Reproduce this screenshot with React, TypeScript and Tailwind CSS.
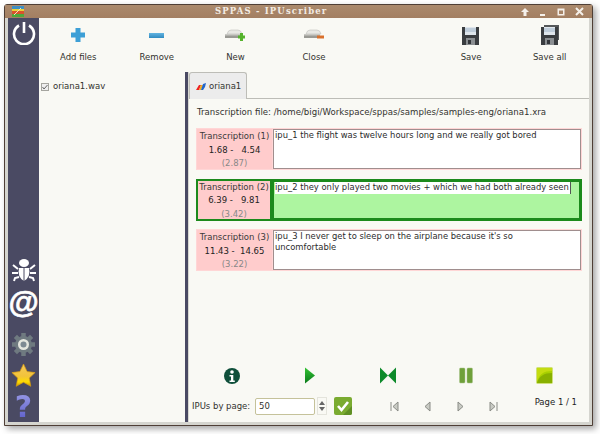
import React from "react";

const Tool = ({ label, children }: { label: string; children?: React.ReactNode }) => (
  <div className="flex flex-col items-center">
    <div className="flex h-[24px] w-[32px] items-center justify-center">{children}</div>
    <div className="mt-[4px] text-[8.5px] leading-[13px] text-[#33332f]">{label}</div>
  </div>
);

const Floppy = ({ stacked }: { stacked?: boolean }) => (
  <svg width="22" height="22" viewBox="0 0 22 22">
    {stacked && <path d="M5 1h15v15H5z" fill="#55585a" />}
    <path d="M2 3h17v18H2z" fill="#3a3d40" />
    <path d="M5 3h11v8H5z" fill="#dfe6ec" />
    <path d="M5 5h11M5 7h11" stroke="#9fb4c8" strokeWidth="1" />
    <path d="M6 14h9v7H6z" fill="#8b8f92" />
    <path d="M8 16h3v4H8z" fill="#33363a" />
  </svg>
);

const Disk = ({ color }: { color: string }) => (
  <svg width="22" height="14" viewBox="0 0 22 14">
    <path d="M3 6 Q4 2 7 2h7q3 0 4 4z" fill="#e8e8e4" stroke="#b5b5b0" strokeWidth=".5" />
    <path d="M1 6h16v4H1z" fill="#9a9a94" />
    <path d="M1 6h16v1.5H1z" fill="#c9c9c4" />
    <path d="M14 7.5h7v3h-7z" fill={color} />
    {color === "#55b32c" && <path d="M16 5h3v8h-3z" fill={color} />}
  </svg>
);

const Card = ({
  n, time, dur, text, active,
}: { n: number; time: string; dur: string; text: string; active?: boolean }) => (
  <div className={`flex h-[42px] p-[1px] ${active ? "bg-[#1c8a1c]" : "bg-[#ffd6d6]"}`}>
    <div className={`flex shrink-0 flex-col items-center whitespace-nowrap bg-[#ffcccc] text-[8.5px] leading-[13.5px] ${active ? "w-[74px] pt-0 border border-[#1c8a1c]" : "w-[75px] pt-[1px]"}`}>
      <div className="text-[#3a3a3a]">Transcription ({n})</div>
      <div className="whitespace-pre text-[#222]">{time}</div>
      <div className="text-[#888]">{dur}</div>
    </div>
    <div className={`min-w-0 flex-1 whitespace-pre-line px-[1px] text-[8.4px] leading-[11px] text-[#2b2b2b] ${active ? "ml-[1px] border-2 border-[#1c8a1c] bg-[#adf5a0]" : "ml-[1px] border border-[#a08e8e] bg-white"}`}>
      {active ? (
        <span className="border-r border-[#555] bg-white pr-[1px] pb-[2px]">{text}</span>
      ) : text}
    </div>
  </div>
);

const Nav = ({ d }: { d: string }) => (
  <svg width="9" height="11" viewBox="0 0 9 11">
    <path d={d} fill="#c9cbc4" stroke="#8a8c86" strokeWidth="1" />
  </svg>
);

export default function App() {
  return (
    <div className="h-[434px] w-[600px] overflow-hidden bg-white pl-[4px] pt-[4px] font-['DejaVu_Sans',sans-serif]">
      <div className="flex h-[422px] w-[589px] flex-col rounded-t-[3px] border border-[#4f3f36] bg-[#d5d5cf] shadow-[3px_3px_6px_rgba(0,0,0,0.35)]">
        <div className="relative flex h-[13px] shrink-0 items-center bg-gradient-to-b from-[#ab8a6d] to-[#a37f62]">
          <svg className="ml-[7px]" width="12" height="11" viewBox="0 0 12 11">
            <rect width="12" height="3" fill="#3d8fc4" />
            <rect y="3" width="12" height="2" fill="#e8d23a" />
            <rect y="5" width="12" height="3" fill="#d9532c" />
            <rect y="8" width="12" height="3" fill="#4fa83a" />
            <path d="M2 9 9 2" stroke="#f2e3c0" strokeWidth="1" />
          </svg>
          <div className="ml-[191px] font-['DejaVu_Serif',serif] text-[8.5px] font-bold leading-[13px] tracking-[1.15px] text-[#f3ece4]">
            SPPAS - IPUscriber
          </div>
          <div className="ml-auto mr-[8px] flex items-center gap-[10px] text-white">
            <svg width="8" height="8" viewBox="0 0 8 8"><path d="M4 0 8 4H5.5v4h-3V4H0z" fill="#f5f0ea" /></svg>
            <svg width="8" height="8" viewBox="0 0 8 8"><path d="M1 6h5v2H1z" fill="#f5f0ea" /></svg>
            <svg width="8" height="8" viewBox="0 0 8 8"><path d="M.5.5h7v7h-7zM2 2.5v3.500h4v-3.500z" fill="#f5f0ea" fillRule="evenodd" /></svg>
            <svg width="9" height="9" viewBox="0 0 9 9"><path d="M1 1l7 7M8 1 1 8" stroke="#f5f0ea" strokeWidth="2" /></svg>
          </div>
        </div>

        <div className="flex min-h-0 flex-1 pb-[3px] pl-[3px] pr-[3px]">
          <div className="flex w-[31px] shrink-0 flex-col items-center bg-[#4a4a63]">
            <svg className="mt-[3px]" width="24" height="24" viewBox="0 0 24 24">
              <path d="M7 4.500a10 10 0 1 0 10 0" fill="none" stroke="#fff" strokeWidth="2.600" />
              <path d="M12 1v11" stroke="#fff" strokeWidth="2.600" />
            </svg>
            <svg className="mt-[213px]" width="26" height="24" viewBox="0 0 26 24">
              <ellipse cx="13" cy="5" rx="5" ry="4" fill="#fff" />
              <path d="M8 10h10q2 9-5 13Q6 19 8 10z" fill="#fff" />
              <path d="M13 10v13" stroke="#4a4a63" strokeWidth="1" />
              <path d="M7 11 2 7M7 15H1M8 19l-4 1-1 3M19 11l5-4M19 15h6M18 19l4 1 1 3" stroke="#fff" strokeWidth="2" fill="none" />
            </svg>
            <div className="mt-[8px] h-[29px] font-['Liberation_Sans',sans-serif] text-[31px] font-bold leading-[26px] text-white [-webkit-text-stroke:0.6px_white]">@</div>
            <svg className="mt-[13px]" width="25" height="25" viewBox="0 0 25 25">
              <g stroke="#6f7a80" strokeWidth="4.500">
                <path d="M12.500 1v23M1 12.500h23M4.400 4.400l16.200 16.200M20.600 4.400 4.400 20.600" />
              </g>
              <circle cx="12.500" cy="12.500" r="8.500" fill="#6f7a80" />
              <circle cx="12.500" cy="12.500" r="5.500" fill="#e4e6de" />
              <circle cx="12.500" cy="12.500" r="3" fill="#7d8a92" />
            </svg>
            <svg className="mt-[6px]" width="25" height="24" viewBox="0 0 25 24">
              <defs>
                <linearGradient id="st" x1="0" y1="0" x2="0" y2="1">
                  <stop offset="0" stopColor="#f5c95a" />
                  <stop offset=".55" stopColor="#f2c33a" />
                  <stop offset=".8" stopColor="#ffdd00" />
                  <stop offset="1" stopColor="#c99a00" />
                </linearGradient>
              </defs>
              <path d="M12.500 1l3.600 7.600 8 1-5.800 5.500 1.500 8.200-7.300-4-7.300 4 1.500-8.200L.9 9.600l8-1z" fill="url(#st)" stroke="#d79b12" strokeWidth=".7" />
            </svg>
            <div className="mt-[5px] bg-gradient-to-b from-[#9a9ae6] to-[#5a5ac8] bg-clip-text font-['DejaVu_Sans',sans-serif] text-[30px] font-bold leading-[30px] text-transparent">?</div>
          </div>

          <div className="flex min-w-0 flex-1 flex-col bg-[#f9f9f4]">
            <div className="grid h-[54px] shrink-0 grid-cols-7 pt-[5px]">
              <Tool label="Add files">
                <svg width="16" height="16" viewBox="0 0 16 16">
                  <path d="M5.500 1h5v4.500H15v5h-4.500V15h-5v-4.500H1v-5h4.500z" fill="#3d9fd6" />
                </svg>
              </Tool>
              <Tool label="Remove">
                <div className="h-[5px] w-[15px] bg-gradient-to-b from-[#62b4e0] to-[#2f8bc0]" />
              </Tool>
              <Tool label="New"><Disk color="#55b32c" /></Tool>
              <Tool label="Close"><Disk color="#d9702c" /></Tool>
              <div />
              <Tool label="Save"><Floppy /></Tool>
              <Tool label="Save all"><Floppy stacked /></Tool>
            </div>

            <div className="flex min-h-0 flex-1">
              <div className="w-[146px] shrink-0 pl-[2px] pt-[8px]">
                <div className="flex items-center text-[8.5px] leading-[13px] text-[#33332f]">
                  <span className="flex h-[8px] w-[8px] items-center justify-center border border-[#a5a59f] bg-[#eee] text-[7px] leading-[7px]">
                    <svg width="6" height="6" viewBox="0 0 6 6"><path d="M.5 3l1.500 2L5.500 1" stroke="#666" fill="none" /></svg>
                  </span>
                  <span className="ml-[4px]">oriana1.wav</span>
                </div>
              </div>

              <div className="relative flex w-[3px] shrink-0 bg-[#4a4a63]" />
              <div className="flex w-[1px] shrink-0 bg-[#d8d8d2]" />

              <div className="flex min-w-0 flex-1 flex-col">
                <div className="flex h-[27px] shrink-0">
                  <div className="flex h-[27px] w-[58px] items-center rounded-t-[3px] border border-b-0 border-[#bdbdb7] bg-[#ececec] pl-[6px] text-[8.5px] text-[#33332f]">
                    <svg width="10" height="8" viewBox="0 0 10 8">
                      <path d="M0 8 3 3h2L3 8z" fill="#e22" />
                      <path d="M3 8l2-5h2L5 8z" fill="#f0b020" />
                      <path d="M5 8l2-6 3-1-1 4-2 3z" fill="#26c" />
                    </svg>
                    <span className="ml-[3px]">oriana1</span>
                  </div>
                  <div className="flex-1 border-b border-[#bdbdb7]" />
                </div>
                <div className="flex min-h-0 flex-1 flex-col px-[7px] pt-[6px]">
                  <div className="mb-[9px] pl-[1px] text-[8.6px] leading-[14px] text-[#33332f]">
                    Transcription file: /home/bigi/Workspace/sppas/samples/samples-eng/oriana1.xra
                  </div>
                  <div className="flex flex-col gap-[8.5px]">
                    <Card n={1} time={"1.68 -   4.54"} dur="(2.87)" text="ipu_1 the flight was twelve hours long and we really got bored" />
                    <Card active n={2} time={"6.39 -   9.81"} dur="(3.42)" text="ipu_2 they only played two movies + which we had both already seen" />
                    <Card n={3} time={"11.43 -  14.65"} dur="(3.22)" text={"ipu_3 I never get to sleep on the airplane because it's so\nuncomfortable"} />
                  </div>

                  <div className="-ml-[3px] mt-auto grid h-[22px] w-[390px] grid-cols-5">
                    <div className="flex justify-center">
                      <svg width="18" height="18" viewBox="0 0 18 18">
                        <circle cx="9" cy="9" r="8" fill="#0f4f3a" />
                        <circle cx="9" cy="5" r="1.800" fill="#fff" />
                        <path d="M6.500 8h3.800v5.500h1.500V15H6.500v-1.500H8V9.500H6.500z" fill="#fff" />
                      </svg>
                    </div>
                    <div className="flex justify-center">
                      <svg width="12" height="17" viewBox="0 0 12 17">
                        <defs><linearGradient id="pl" x1="0" y1="0" x2="0" y2="1"><stop offset="0" stopColor="#35c435" /><stop offset="1" stopColor="#0a7a1a" /></linearGradient></defs>
                        <path d="M1 .5 11 8.500 1 16.500z" fill="url(#pl)" />
                      </svg>
                    </div>
                    <div className="flex justify-center">
                      <svg width="16" height="17" viewBox="0 0 16 17">
                        <path d="M0 .5 8 8.500 0 16.500zM16 .5 8 8.500 16 16.500z" fill="#0d8a2a" />
                      </svg>
                    </div>
                    <div className="flex justify-center">
                      <svg width="14" height="17" viewBox="0 0 14 17">
                        <rect x=".5" y="1" width="5.500" height="15" rx="1" fill="#6fa03a" stroke="#a8c48a" strokeWidth=".5" />
                        <rect x="8" y="1" width="5.500" height="15" rx="1" fill="#6fa03a" stroke="#a8c48a" strokeWidth=".5" />
                      </svg>
                    </div>
                    <div className="flex justify-center">
                      <svg width="17" height="17" viewBox="0 0 17 17">
                        <rect x=".5" y=".5" width="16" height="16" rx="1" fill="#a8d000" stroke="#cfe07a" />
                        <path d="M1 15C3 7 8 4 16 4V1H1z" fill="#c4dc10" />
                        <path d="M1 16C3 9 8 6 16 6v10z" fill="#88b000" />
                      </svg>
                    </div>
                  </div>

                  <div className="mb-[6px] mt-[7px] flex h-[20px] shrink-0 items-center">
                    <span className="-ml-[4px] w-[59px] whitespace-nowrap text-[8.5px] text-[#33332f]">IPUs by page:</span>
                    <div className="ml-[4px] flex h-[17px] w-[60px] items-center rounded-[2px] border border-[#c5c29a] bg-white pl-[3px] text-[8.5px] text-[#33332f]">50</div>
                    <div className="ml-[2px] flex h-[18px] w-[10px] flex-col items-center justify-center gap-[2px] border border-[#e4e4dc]">
                      <svg width="6" height="4" viewBox="0 0 6 4"><path d="M3 0 6 4H0z" fill="#666" /></svg>
                      <svg width="6" height="4" viewBox="0 0 6 4"><path d="M0 0h6L3 4z" fill="#666" /></svg>
                    </div>
                    <svg className="ml-[7px]" width="18" height="18" viewBox="0 0 18 18">
                      <rect width="18" height="18" rx="2" fill="#7aab30" />
                      <path d="M18 9v7a2 2 0 0 1-2 2H9z" fill="#5f8f24" />
                      <path d="M4 9l3.500 4L14 5" stroke="#fff" strokeWidth="2.600" fill="none" />
                    </svg>
                    <div className="ml-[38px] flex items-center gap-[24px]">
                      <Nav d="M1 1v9M8 1v9L3 5.500z" />
                      <Nav d="M7 1v9L2 5.500z" />
                      <Nav d="M2 1v9l5-4.500z" />
                      <Nav d="M8 1v9M1 1v9l5-4.500z" />
                    </div>
                    <div className="ml-auto mb-[7px] mr-[5px] whitespace-nowrap text-[8.5px] text-[#222]">Page 1 / 1</div>
                  </div>
                </div>
              </div>
            </div>
          </div>
        </div>
      </div>
    </div>
  );
}
